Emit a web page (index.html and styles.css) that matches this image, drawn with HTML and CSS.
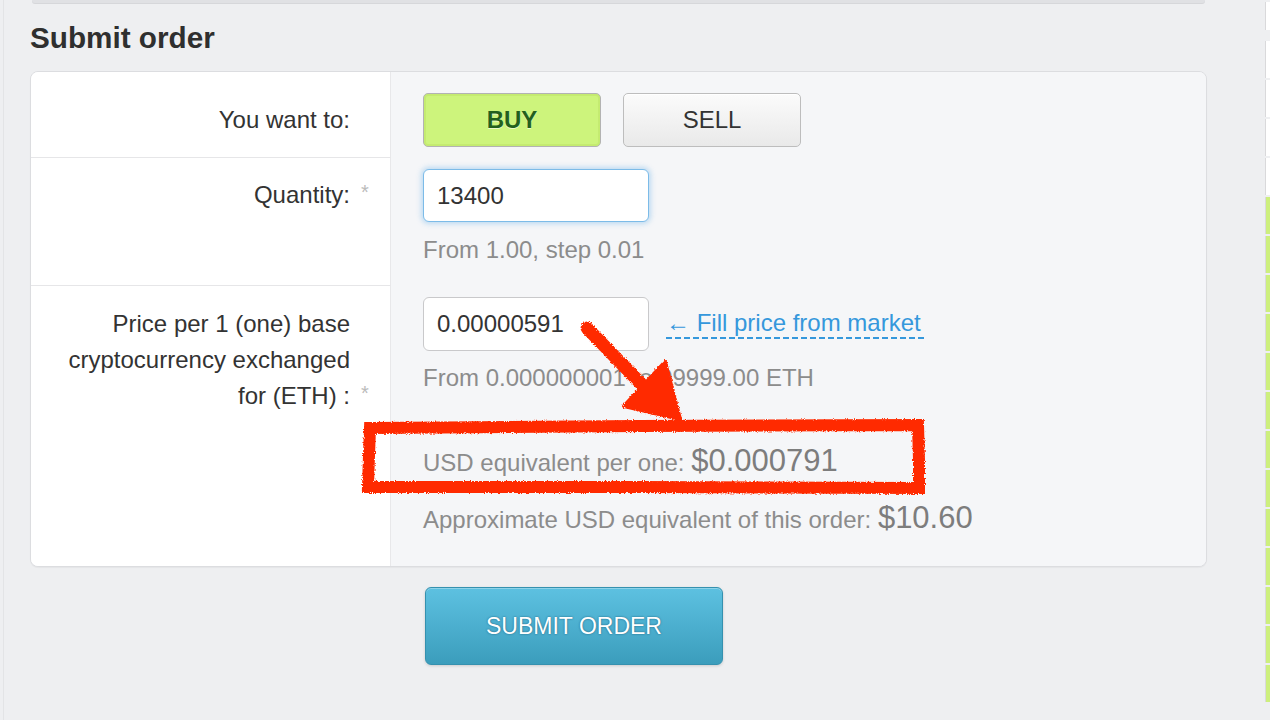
FILE: index.html
```html
<!DOCTYPE html>
<html lang="en">
<head>
<meta charset="utf-8">
<title>Submit order</title>
<link rel="stylesheet" href="styles.css">
</head>
<body>
<div class="page">
  <main class="main">
    <div class="prev-panel"></div>
    <h2 class="title">Submit order</h2>
    <div class="card">
      <div class="row">
        <div class="label-cell pad-first">
          <div class="label"><div class="label-text">You want to:</div><div class="req"></div></div>
        </div>
        <div class="field-cell field-first">
          <div class="toggle">
            <button class="btn buy" type="button">BUY</button>
            <button class="btn sell" type="button">SELL</button>
          </div>
        </div>
      </div>
      <div class="row">
        <div class="label-cell pad-second">
          <div class="label"><div class="label-text">Quantity:</div><div class="req">*</div></div>
        </div>
        <div class="field-cell field-second">
          <input class="input focused" type="text" value="13400">
          <div class="help help-qty">From 1.00, step 0.01</div>
        </div>
      </div>
      <div class="row last">
        <div class="label-cell pad-third">
          <div class="label"><div class="label-text">Price per 1 (one) base cryptocurrency exchanged for (ETH) :</div><div class="req">*</div></div>
        </div>
        <div class="field-cell field-third">
          <div class="price-line">
            <input class="input" type="text" value="0.00000591">
            <a class="fill-link" href="#">← Fill price from market</a>
          </div>
          <div class="help help-price">From 0.000000001 to 99999.00 ETH</div>
          <div class="help usd-line">USD equivalent per one: <span class="big">$0.000791</span></div>
          <div class="help approx-line">Approximate USD equivalent of this order: <span class="big">$10.60</span></div>
        </div>
      </div>
    </div>
    <div class="actions">
      <button class="submit" type="button">SUBMIT ORDER</button>
    </div>
  </main>
  <aside class="side">
    <div class="cell first"></div>
    <div class="cell"></div>
    <div class="cell"></div>
    <div class="cell"></div>
    <div class="cell"></div>
    <div class="cell green"></div>
    <div class="cell green"></div>
    <div class="cell green"></div>
    <div class="cell green"></div>
    <div class="cell green"></div>
    <div class="cell green"></div>
    <div class="cell green"></div>
    <div class="cell green"></div>
    <div class="cell green"></div>
    <div class="cell green"></div>
    <div class="cell green"></div>
    <div class="cell green"></div>
    <div class="cell green"></div>
  </aside>
</div>
<svg class="annot" width="1270" height="720" viewBox="0 0 1270 720" xmlns="http://www.w3.org/2000/svg">
  <defs>
    <filter id="rough" x="-5%" y="-5%" width="110%" height="110%">
      <feTurbulence type="fractalNoise" baseFrequency="0.9" numOctaves="2" seed="3" result="noise"/>
      <feDisplacementMap in="SourceGraphic" in2="noise" scale="3.5" xChannelSelector="R" yChannelSelector="G"/>
    </filter>
  </defs>
  <g filter="url(#rough)" fill="#ff2b06" stroke="#ff2b06">
    <path d="M370 428 L640 426 L918 425 L919 460 L919 488 L640 487 L368 487 L369 455 Z" fill="none" stroke-width="12" stroke-linejoin="miter"/>
    <path d="M587 328 L648 391" fill="none" stroke-width="13" stroke-linecap="round"/>
    <path d="M665 362 L624 406 L680 419 Z" stroke-width="4" stroke-linejoin="round"/>
  </g>
</svg>
</body>
</html>
```

FILE: styles.css
```css
* { box-sizing: border-box; }

html, body {
  margin: 0;
  padding: 0;
}

body {
  background: #eeeff1;
  font-family: "Liberation Sans", Arial, Helvetica, sans-serif;
  color: #333;
  width: 1270px;
  height: 720px;
  overflow: hidden;
  position: relative;
}

.page {
  display: flex;
  height: 720px;
}

.main {
  flex: 1;
  margin-left: 3px;
  border-left: 1px solid #e3e4e6;
  padding-left: 26px;
}

.prev-panel {
  height: 3px;
  margin-left: 2px;
  width: 1173px;
  background: #e0e1e4;
  border-radius: 0 0 5px 5px;
  box-shadow: 0 1px 0 #d6d7da;
}

.title {
  margin: 17px 0 15px;
  font-size: 29.7px;
  line-height: 36px;
  font-weight: 700;
  color: #2f2f2f;
}

.card {
  width: 1177px;
  border: 1px solid #dcdde0;
  border-radius: 8px;
  overflow: hidden;
  background: #f5f6f8;
  box-shadow: 0 1px 1px rgba(0, 0, 0, 0.04);
}

.row {
  display: grid;
  grid-template-columns: 360px 1fr;
}

.label-cell {
  background: #fff;
  border-right: 1px solid #e8e8ea;
  border-bottom: 1px solid #e6e6e8;
  padding-left: 19px;
}

.row.last .label-cell { border-bottom: none; }

.pad-first { padding-top: 30px; }
.pad-second { padding-top: 19px; }
.pad-third { padding-top: 20px; }

.label {
  display: flex;
  align-items: flex-end;
}

.label-text {
  flex: 1;
  text-align: right;
  font-size: 24px;
  line-height: 36px;
  color: #333;
}

.req {
  width: 40px;
  padding-left: 11px;
  font-size: 20px;
  line-height: 36px;
  color: #bbbbbb;
  position: relative;
  top: -3px;
}

.field-cell {
  background: #f5f6f8;
  padding-left: 32px;
}

.field-first { padding-top: 21px; padding-bottom: 11px; }
.field-second { padding-top: 11px; padding-bottom: 21px; }
.field-third { padding-top: 11px; padding-bottom: 28px; }

.toggle {
  display: flex;
  gap: 22px;
}

.btn {
  width: 178px;
  height: 54px;
  border-radius: 5px;
  font-family: "Liberation Sans", Arial, sans-serif;
  font-size: 24px;
  padding: 0;
  cursor: pointer;
}

.buy {
  background: #cdf47c;
  border: 1px solid #b3b3b3;
  box-shadow: inset 0 0 0 2px #c4eb70;
  color: #23601c;
  font-weight: 700;
  text-shadow: 0 1px 0 rgba(255, 255, 255, 0.6);
}

.sell {
  background: linear-gradient(#fbfbfb, #e9e9e9);
  border: 1px solid #bdbdbd;
  color: #333;
  box-shadow: inset 0 1px 0 #fff;
}

.input {
  display: block;
  width: 226px;
  height: 54px;
  border: 1px solid #c9c9cb;
  border-radius: 6px;
  background: #fff;
  padding: 0 13px;
  font-family: "Liberation Sans", Arial, sans-serif;
  font-size: 24px;
  color: #333;
  outline: none;
}

.input.focused {
  height: 53px;
  border-color: #7cbbe8;
  box-shadow: 0 0 5px 2px rgba(125, 187, 235, 0.45);
}

.help {
  font-size: 24px;
  line-height: 30px;
  color: #8c8c8c;
}

.help-qty { margin-top: 13px; }
.help-price { margin-top: 12px; }

.usd-line {
  margin-top: 50px;
  line-height: 36px;
}

.approx-line {
  margin-top: 19px;
  line-height: 36px;
}

.big {
  font-size: 31px;
  color: #7d7d7d;
}

.price-line {
  display: flex;
  align-items: center;
  gap: 17px;
}

.fill-link {
  display: inline-block;
  font-size: 24px;
  line-height: 28px;
  color: #3598dc;
  text-decoration: none;
  padding-bottom: 2px;
  padding-right: 6px;
  background: linear-gradient(to right, #3598dc 65%, transparent 65%) left bottom / 9px 2px repeat-x;
}

.actions {
  padding-left: 395px;
  margin-top: 20px;
}

.submit {
  width: 298px;
  height: 78px;
  border: 1px solid #3591af;
  border-radius: 6px;
  background: linear-gradient(#5dc1e1, #3b9dbc);
  box-shadow: inset 0 1px 0 rgba(255, 255, 255, 0.3), 0 1px 3px rgba(0, 0, 0, 0.15);
  color: #fff;
  font-family: "Liberation Sans", Arial, sans-serif;
  font-size: 23px;
  text-shadow: 0 0 2px rgba(20, 85, 115, 0.9);
  padding: 0;
  cursor: pointer;
}

.side {
  width: 5px;
  display: flex;
  flex-direction: column;
  gap: 2px;
  padding-top: 2px;
}

.cell {
  height: 37px;
  flex: none;
  background: #fff;
  border-left: 1px solid #d9d9db;
}

.cell.first {
  height: 28px;
  margin-bottom: 9px;
}

.cell.green { background: #cdef7d; }

.annot {
  position: absolute;
  top: 0;
  left: 0;
  pointer-events: none;
}
```
